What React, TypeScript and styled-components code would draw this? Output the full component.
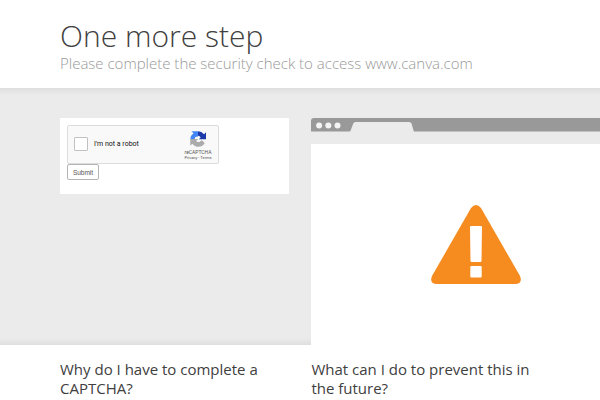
import React from "react";
import styled, { createGlobalStyle } from "styled-components";

const GlobalStyle = createGlobalStyle`
  * { box-sizing: border-box; }
  body {
    margin: 0;
    background: #fff;
    color: #404040;
    font-family: "Open Sans", "Noto Sans", sans-serif;
    overflow: hidden;
  }
`;

const Page = styled.div`
  width: 600px;
  height: 400px;
  overflow: hidden;
`;

const Header = styled.header`
  height: 88px;
  padding: 15px 0 0 60px;
  white-space: nowrap;
`;

const Title = styled.h1`
  margin: 0;
  font-size: 30px;
  font-weight: 300;
  line-height: 41px;
`;

const Subtitle = styled.h2`
  margin: 0;
  font-size: 15px;
  font-weight: 300;
  line-height: 14px;
  color: #999;
`;

const Columns = styled.div`
  display: grid;
  grid-template-columns: 229px 289px;
  column-gap: 22.4px;
  padding-left: 60px;
`;

const Band = styled(Columns)`
  height: 256.5px;
  padding-top: 30px;
  background: linear-gradient(
    to bottom,
    #dedede 0,
    #ebebeb 7px,
    #ebebeb 250px,
    #dedede 100%
  );
`;

const CaptchaPanel = styled.form`
  height: 75.5px;
  padding: 7px;
  background: #fff;
`;

const Captcha = styled.div`
  display: flex;
  align-items: center;
  width: 152px;
  height: 39px;
  padding: 0 5px 0 6px;
  background: #f9f9f9;
  border: 1px solid #dcdcdc;
  border-radius: 2px;
`;

const Checkbox = styled.span`
  width: 14px;
  height: 14px;
  margin-top: -2px;
  background: #fff;
  border: 1px solid #c1c1c1;
  border-radius: 1px;
`;

const CaptchaLabel = styled.span`
  margin: -1px 0 0 6px;
  color: #111;
  font: 7px/10px Roboto, sans-serif;
`;

const Brand = styled.div`
  display: flex;
  flex-direction: column;
  align-items: center;
  width: 30px;
  margin: 1px 0 0 auto;
  white-space: nowrap;
  color: #555;
  font-family: Roboto, sans-serif;
`;

const BrandName = styled.span`
  margin-top: 2px;
  font-size: 5px;
  line-height: 6px;
`;

const BrandLinks = styled.span`
  font-size: 4px;
  line-height: 5px;
`;

const Submit = styled.button`
  display: block;
  width: 32px;
  height: 16px;
  padding: 0;
  background: #fff;
  border: 1px solid #b5b5b5;
  border-radius: 2px;
  color: #555;
  font: 6.5px/13px "Liberation Sans", sans-serif;
`;

const BrowserWindow = styled.div`
  height: 226.5px;
`;

const BrowserBar = styled.svg`
  display: block;
  width: 289px;
  height: 14px;
`;

const Viewport = styled.div`
  display: flex;
  justify-content: center;
  height: 201px;
  width: 329px;
  margin-top: 12px;
  padding-top: 61px;
  background: #fff;
`;

const Warning = styled.svg`
  display: block;
  width: 90px;
  height: 80px;
`;

const Questions = styled(Columns)`
  padding-top: 15px;
`;

const Question = styled.h2`
  margin: 0;
  font-size: 15px;
  font-weight: 400;
  line-height: 19.5px;
  white-space: nowrap;
`;

const RecaptchaLogo = () => (
  <svg width="16" height="16" viewBox="0 0 64 64">
    <path d="M64 32V5l-8 8A32 32 0 0 0 32 1v18c7 0 9 4 10 8l-7 6h29Z" fill="#1c3aa9" />
    <path d="M32 1H6l8 8A32 32 0 0 0 1 32h18c0-7 4-10 13-10V1Z" fill="#4285f4" />
    <path d="M1 32v27l8-8c13 17 39 17 50-3L46 36c-5 11-17 10-21 4l7-8H1Z" fill="#ababab" />
  </svg>
);

export default function App() {
  return (
    <Page>
      <GlobalStyle />
      <Header>
        <Title>One more step</Title>
        <Subtitle>Please complete the security check to access www.canva.com</Subtitle>
      </Header>
      <Band>
        <CaptchaPanel onSubmit={(e) => e.preventDefault()}>
          <Captcha>
            <Checkbox />
            <CaptchaLabel>I'm not a robot</CaptchaLabel>
            <Brand>
              <RecaptchaLogo />
              <BrandName>reCAPTCHA</BrandName>
              <BrandLinks>Privacy - Terms</BrandLinks>
            </Brand>
          </Captcha>
          <Submit type="submit">Submit</Submit>
        </CaptchaPanel>
        <BrowserWindow>
          <BrowserBar viewBox="0 0 289 14">
            <path d="M0 13.5V3Q0 0 3 0H289V13.5Z" fill="#999" />
            <path d="M39 14L42.3 5.5Q43 4 44.5 4H98Q100 4 100.5 5.5L103 14Z" fill="#ebebeb" />
            <circle cx="8.1" cy="7.6" r="3" fill="#f4f4f4" />
            <circle cx="17.3" cy="7.6" r="3" fill="#f4f4f4" />
            <circle cx="26.5" cy="7.6" r="3" fill="#f4f4f4" />
          </BrowserBar>
          <Viewport>
            <Warning viewBox="0 0 90 80">
              <path
                d="M40 3Q45 -3 50 3L89 71Q92 79 84 79H6Q-2 79 1 71Z"
                fill="#f68b1f"
              />
              <path d="M40 21H50Q51 21 51 22L50.5 56Q50.5 57 49.5 57H40.5Q39.5 57 39.5 56L39 22Q39 21 40 21Z" fill="#fff" />
              <rect x="39.3" y="61" width="11.4" height="11.5" rx="1" fill="#fff" />
            </Warning>
          </Viewport>
        </BrowserWindow>
      </Band>
      <Questions>
        <Question>
          Why do I have to complete a
          <br />
          CAPTCHA?
        </Question>
        <Question>
          What can I do to prevent this in
          <br />
          the future?
        </Question>
      </Questions>
    </Page>
  );
}
